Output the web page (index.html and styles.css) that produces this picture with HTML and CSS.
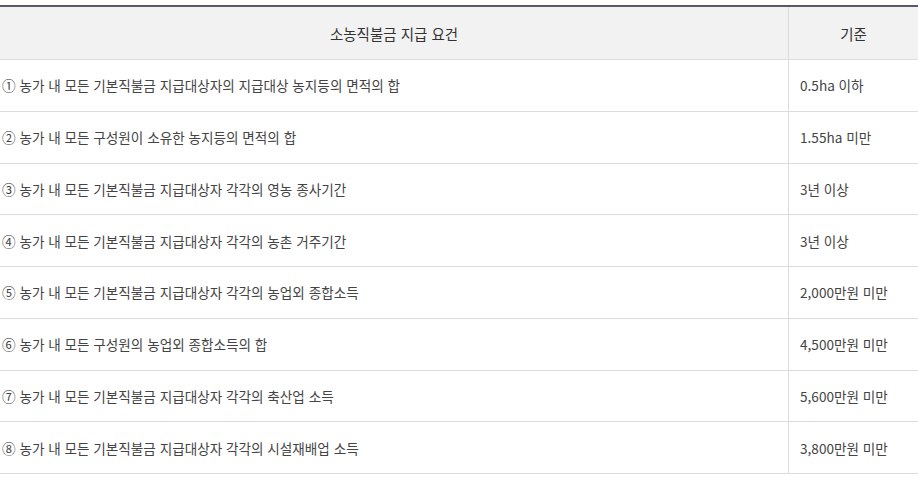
FILE: index.html
```html
<!DOCTYPE html>
<html lang="ko">
<head>
<meta charset="utf-8">
<link rel="stylesheet" href="styles.css">
</head>
<body>
<table class="req-table">
  <thead>
    <tr>
      <th class="col-req">소농직불금 지급 요건</th>
      <th class="col-std">기준</th>
    </tr>
  </thead>
  <tbody>
    <tr><td class="req">① 농가 내 모든 기본직불금 지급대상자의 지급대상 농지등의 면적의 합</td><td class="std">0.5ha 이하</td></tr>
    <tr><td class="req">② 농가 내 모든 구성원이 소유한 농지등의 면적의 합</td><td class="std">1.55ha 미만</td></tr>
    <tr><td class="req">③ 농가 내 모든 기본직불금 지급대상자 각각의 영농 종사기간</td><td class="std">3년 이상</td></tr>
    <tr><td class="req">④ 농가 내 모든 기본직불금 지급대상자 각각의 농촌 거주기간</td><td class="std">3년 이상</td></tr>
    <tr><td class="req">⑤ 농가 내 모든 기본직불금 지급대상자 각각의 농업외 종합소득</td><td class="std">2,000만원 미만</td></tr>
    <tr><td class="req">⑥ 농가 내 모든 구성원의 농업외 종합소득의 합</td><td class="std">4,500만원 미만</td></tr>
    <tr><td class="req">⑦ 농가 내 모든 기본직불금 지급대상자 각각의 축산업 소득</td><td class="std">5,600만원 미만</td></tr>
    <tr><td class="req">⑧ 농가 내 모든 기본직불금 지급대상자 각각의 시설재배업 소득</td><td class="std">3,800만원 미만</td></tr>
  </tbody>
</table>
</body>
</html>
```
FILE: styles.css
```css
html, body {
  margin: 0;
  padding: 0;
  background: #fff;
}
body {
  padding-top: 5px;
  font-family: "Noto Sans CJK KR", "Noto Sans", sans-serif;
  font-size: 13.6px;
  color: #444;
}
.req-table {
  width: 918px;
  border-collapse: collapse;
  border-top: 2px solid #555a68;
  table-layout: fixed;
}
.req-table th {
  background: #f2f2f2;
  font-weight: 400;
  font-size: 14.5px;
  color: #333;
  height: 52px;
  padding: 0;
  text-align: center;
  border-bottom: 1px solid #dcdcdc;
}
.col-req { width: 788px; }
.req-table th.col-std {
  border-left: 1px solid #dcdcdc;
}
.req-table td {
  height: 50.75px;
  padding: 0;
  border-bottom: 1px solid #dcdcdc;
  vertical-align: middle;
}
.req-table td.req {
  padding-left: 2px;
}
.req-table td.std {
  padding-left: 11px;
  border-left: 1px solid #dcdcdc;
}
```
